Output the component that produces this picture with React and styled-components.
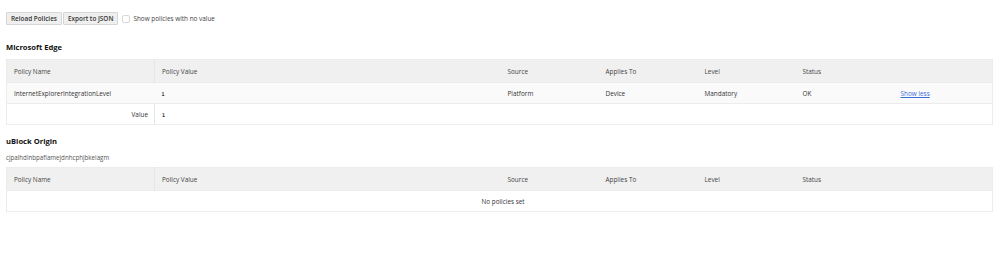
import React from "react";
import styled, { createGlobalStyle } from "styled-components";

const Global = createGlobalStyle`
  html, body { margin: 0; padding: 0; background: #fff; }
  body { font-family: "Open Sans", "Noto Sans", sans-serif; color: #333; }
`;

const Page = styled.div`
  padding: 12px 6px 0 6px;
  width: 987px;
`;

const Toolbar = styled.div`
  display: flex;
  align-items: center;
  height: 13px;
`;

const Button = styled.button`
  font-family: "Open Sans", sans-serif;
  font-size: 6.4px;
  font-weight: 600;
  color: #333;
  background: #efefef;
  border: 1px solid #d6d6d6;
  border-radius: 1px;
  height: 13px;
  padding: 0 4px;
  margin: 0 1px 0 0;
  display: flex;
  align-items: center;
  box-sizing: border-box;
`;

const Check = styled.span`
  width: 8px;
  height: 8px;
  border: 1px solid #d9d9d9;
  border-radius: 2px;
  box-sizing: border-box;
  margin: 0 3px 0 3px;
  background: #fff;
`;

const CheckLabel = styled.span`
  font-size: 6.4px;
  color: #444;
`;

const Heading = styled.h3`
  margin: 0;
  font-size: 7.6px;
  font-weight: 700;
  color: #111;
  height: 10px;
  line-height: 10px;
  margin-top: ${(p) => p.$mt}px;
`;

const ExtId = styled.div`
  font-size: 6.2px;
  color: #555;
  margin-top: 7px;
  line-height: 9px;
`;

const Table = styled.table`
  width: 987px;
  border-collapse: collapse;
  table-layout: fixed;
  border: 1px solid #ececec;
  margin-top: ${(p) => p.$mt}px;
  font-size: 6.4px;
`;

const Row = styled.tr`
  background: ${(p) => p.$bg || "#fff"};
  height: ${(p) => p.$h}px;
  border-bottom: 1px solid #ececec;
`;

const Cell = styled.td`
  padding: 0 0 0 7px;
  text-align: ${(p) => p.$align || "left"};
  color: #333;
  white-space: nowrap;
  overflow: hidden;
  border-right: ${(p) => (p.$divider ? "1px solid #e6e6e6" : "none")};
  padding-right: ${(p) => p.$pr || 0}px;
`;

const HeadCell = styled(Cell).attrs({ as: "th" })`
  font-weight: 400;
  text-align: left;
  color: #444;
`;

const Mono = styled.span`
  font-family: "DejaVu Sans Mono", monospace;
  font-size: 5px;
  font-weight: 700;
  color: #333;
`;

const Link = styled.a`
  color: #3a6fd8;
  text-decoration: underline;
  cursor: pointer;
`;

const Cols = () => (
  <colgroup>
    <col style={{ width: 148 }} />
    <col style={{ width: 346 }} />
    <col style={{ width: 98 }} />
    <col style={{ width: 99 }} />
    <col style={{ width: 98 }} />
    <col style={{ width: 98 }} />
    <col />
  </colgroup>
);

const Header = () => (
  <Row $bg="#f0f0f0" $h={23}>
    <HeadCell $divider>Policy Name</HeadCell>
    <HeadCell>Policy Value</HeadCell>
    <HeadCell>Source</HeadCell>
    <HeadCell>Applies To</HeadCell>
    <HeadCell>Level</HeadCell>
    <HeadCell>Status</HeadCell>
    <HeadCell />
  </Row>
);

export default function App() {
  return (
    <Page>
      <Global />
      <Toolbar>
        <Button>Reload Policies</Button>
        <Button>Export to JSON</Button>
        <Check />
        <CheckLabel>Show policies with no value</CheckLabel>
      </Toolbar>
      <Heading $mt={17}>Microsoft Edge</Heading>
      <Table $mt={7}>
        <Cols />
        <tbody>
          <Header />
          <Row $bg="#fafafa" $h={21}>
            <Cell>InternetExplorerIntegrationLevel</Cell>
            <Cell>
              <Mono>1</Mono>
            </Cell>
            <Cell>Platform</Cell>
            <Cell>Device</Cell>
            <Cell>Mandatory</Cell>
            <Cell>OK</Cell>
            <Cell>
              <Link>Show less</Link>
            </Cell>
          </Row>
          <Row $h={21}>
            <Cell $align="right" $pr={6} $divider>
              Value
            </Cell>
            <Cell colSpan={6}>
              <Mono>1</Mono>
            </Cell>
          </Row>
        </tbody>
      </Table>
      <Heading $mt={11}>uBlock Origin</Heading>
      <ExtId>cjpalhdlnbpafiamejdnhcphjbkeiagm</ExtId>
      <Table $mt={5}>
        <Cols />
        <tbody>
          <Header />
          <Row $h={21}>
            <Cell colSpan={7} $align="center">
              No policies set
            </Cell>
          </Row>
        </tbody>
      </Table>
    </Page>
  );
}
